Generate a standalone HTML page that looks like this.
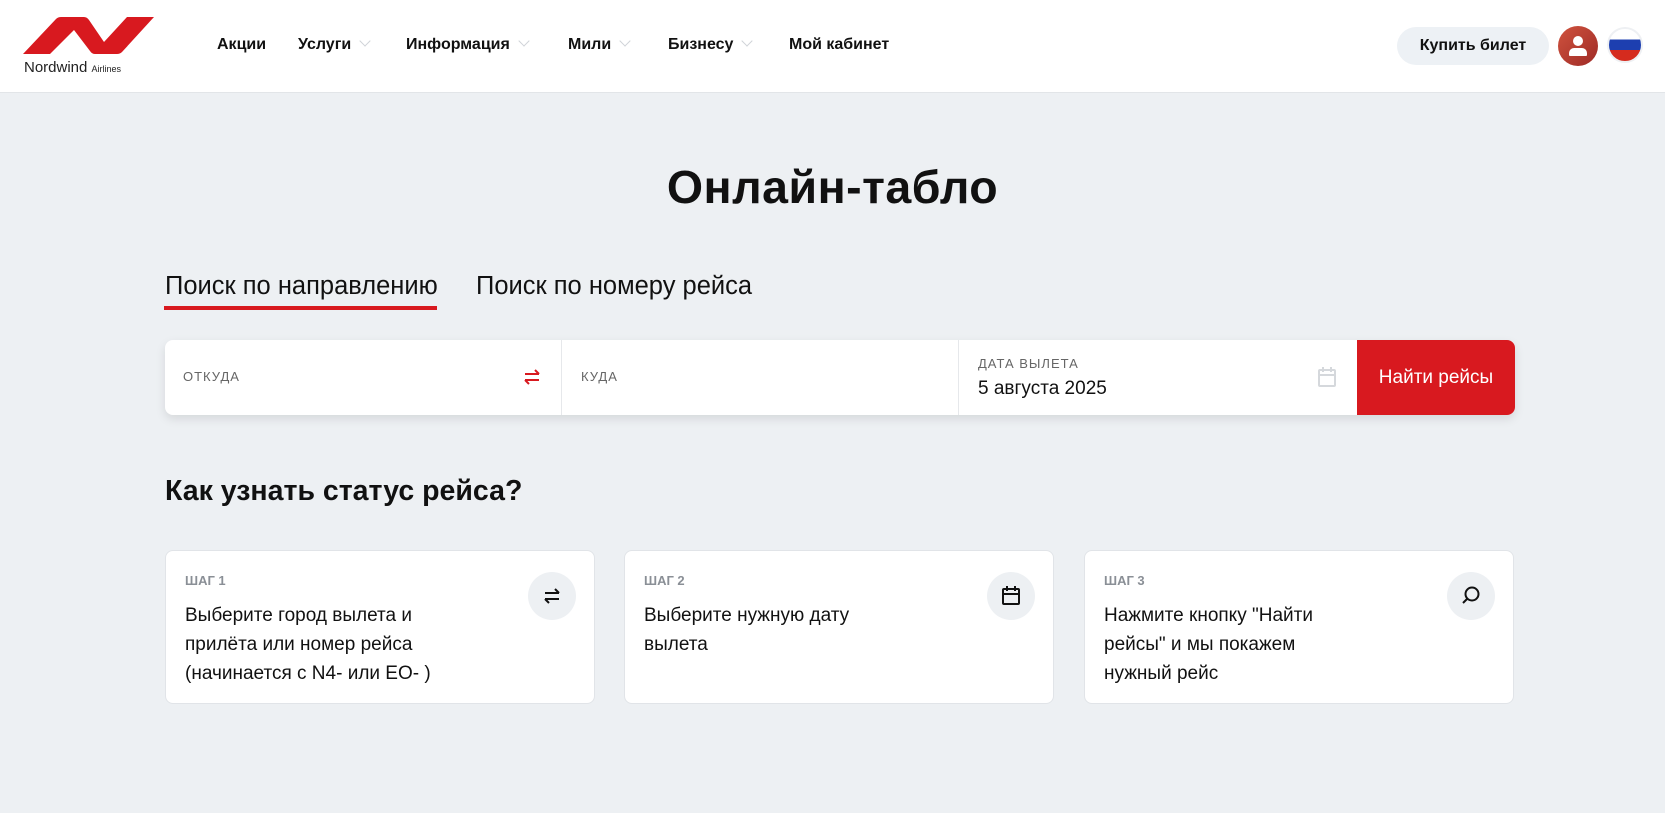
<!DOCTYPE html>
<html><head><meta charset="utf-8"><style>
*{margin:0;padding:0;box-sizing:border-box}
body{width:1665px;height:813px;background:#edf0f3;font-family:"Liberation Sans",Arial,sans-serif;color:#111;position:relative;overflow:hidden}
.hdr{position:absolute;left:0;top:0;width:1665px;height:93px;background:#fff;border-bottom:1px solid #e2e5e8}
.nav{position:absolute;top:36px;font-size:16px;font-weight:bold;color:#111}
.chev{display:inline-block;width:8px;height:8px;border-right:1.5px solid #cfd3d8;border-bottom:1.5px solid #cfd3d8;transform:rotate(45deg);margin-left:10px;position:relative;top:-4px}
.abs{position:absolute}
.card{position:absolute;top:550px;width:430px;height:154px;background:#fff;border:1px solid #e1e4e8;border-radius:8px}
.step{position:absolute;left:19px;top:22px;font-size:13px;color:#8a8f96;font-weight:bold}
.ct{position:absolute;left:19px;top:50px;font-size:19px;line-height:29px;color:#111}
.ic{position:absolute;right:18px;top:21px;width:48px;height:48px;border-radius:50%;background:#edf0f3;display:flex;align-items:center;justify-content:center}
.lbl{font-size:13px;color:#666;letter-spacing:1px}
</style></head><body>
<div class="hdr">
 <svg class="abs" style="left:0;top:0" width="170" height="60" viewBox="0 0 170 60">
  <path d="M23,54 L56,19 Q58,17 61,17 L84,17 Q87,17 89,20 L104,42 L127,17 L154,17 L122,52 Q120,54 117,54 L95,54 Q92,54 90,51 L74,30 L50,54 Z" fill="#d8191f"/>
 </svg>
 <div class="abs" style="left:24px;top:59px;font-size:15px;color:#222">Nordwind <span style="font-size:9px">Airlines</span></div>
 <div class="nav" style="left:217px">Акции</div>
 <div class="nav" style="left:298px">Услуги<span class="chev"></span></div>
 <div class="nav" style="left:406px">Информация<span class="chev"></span></div>
 <div class="nav" style="left:568px">Мили<span class="chev"></span></div>
 <div class="nav" style="left:668px">Бизнесу<span class="chev"></span></div>
 <div class="nav" style="left:789px">Мой кабинет</div>
 <div class="abs" style="left:1397px;top:27px;width:152px;height:38px;border-radius:19px;background:#edf1f5;font-size:16px;font-weight:bold;text-align:center;line-height:38px">Купить билет</div>
 <div class="abs" style="left:1558px;top:26px;width:40px;height:40px;border-radius:50%;background:linear-gradient(135deg,#d0533e,#9e2a26);overflow:hidden">
  <div class="abs" style="left:15px;top:10px;width:10px;height:10px;border-radius:50%;background:#fff"></div>
  <div class="abs" style="left:11px;top:22px;width:18px;height:8px;border-radius:5px 5px 1px 1px;background:#fff"></div>
 </div>
 <div class="abs" style="left:1607px;top:27px;width:36px;height:36px;border-radius:50%;border:2px solid #eef0f3;overflow:hidden;background:linear-gradient(#fff 0 33%,#1d3fb0 33% 66%,#d52b1e 66%)"></div>
</div>
<div class="abs" style="left:0;width:1665px;top:160px;text-align:center;font-size:46.5px;font-weight:bold;letter-spacing:0.5px">Онлайн-табло</div>
<div class="abs" style="left:165px;top:272px;font-size:25.5px">Поиск по направлению</div>
<div class="abs" style="left:164px;top:306px;width:273px;height:4px;background:#d8191f"></div>
<div class="abs" style="left:476px;top:272px;font-size:25.5px">Поиск по номеру рейса</div>
<div class="abs" style="left:165px;top:340px;width:1350px;height:75px;background:#fff;border-radius:8px;box-shadow:0 4px 10px rgba(0,0,0,0.1);overflow:hidden">
 <div class="abs lbl" style="left:18px;top:29px">ОТКУДА</div>
 <svg class="abs" style="left:356px;top:26px" width="22" height="22" viewBox="0 0 22 22" fill="none" stroke="#d8191f" stroke-width="2"><path d="M4 8h14M14 4l4 4M18 14H4M8 18l-4-4"/></svg>
 <div class="abs" style="left:396px;top:0;width:1px;height:75px;background:#e6e8eb"></div>
 <div class="abs lbl" style="left:416px;top:29px">КУДА</div>
 <div class="abs" style="left:793px;top:0;width:1px;height:75px;background:#e6e8eb"></div>
 <div class="abs lbl" style="left:813px;top:16px">ДАТА ВЫЛЕТА</div>
 <div class="abs" style="left:813px;top:38px;font-size:19px">5 августа 2025</div>
 <svg class="abs" style="left:1152px;top:26px" width="20" height="22" viewBox="0 0 20 22" fill="none" stroke="#d5d8dc" stroke-width="2"><rect x="2" y="4" width="16" height="16" rx="1"/><path d="M2 9h16M6 1v5M14 1v5"/></svg>
 <div class="abs" style="left:1192px;top:0;width:158px;height:75px;background:#d8191f;color:#fff;font-size:19px;text-align:center;line-height:75px">Найти рейсы</div>
</div>
<div class="abs" style="left:165px;top:475px;font-size:28.5px;font-weight:bold">Как узнать статус рейса?</div>
<div class="card" style="left:165px"><div class="step">ШАГ 1</div><div class="ct">Выберите город вылета и<br>прилёта или номер рейса<br>(начинается с N4- или EO- )</div>
 <div class="ic"><svg width="22" height="22" viewBox="0 0 22 22" fill="none" stroke="#111" stroke-width="2"><path d="M4 8h14M14 4l4 4M18 14H4M8 18l-4-4"/></svg></div></div>
<div class="card" style="left:624px"><div class="step">ШАГ 2</div><div class="ct">Выберите нужную дату<br>вылета</div>
 <div class="ic"><svg width="20" height="22" viewBox="0 0 20 22" fill="none" stroke="#111" stroke-width="2"><rect x="2" y="4" width="16" height="15" rx="1"/><path d="M2 9h16M6 1v5M14 1v5"/></svg></div></div>
<div class="card" style="left:1084px"><div class="step">ШАГ 3</div><div class="ct">Нажмите кнопку "Найти<br>рейсы" и мы покажем<br>нужный рейс</div>
 <div class="ic"><svg width="22" height="22" viewBox="0 0 22 22" fill="none" stroke="#111" stroke-width="2"><circle cx="12" cy="9" r="6.5"/><path d="M7.5 13.5L3 18"/></svg></div></div>
</body></html>
